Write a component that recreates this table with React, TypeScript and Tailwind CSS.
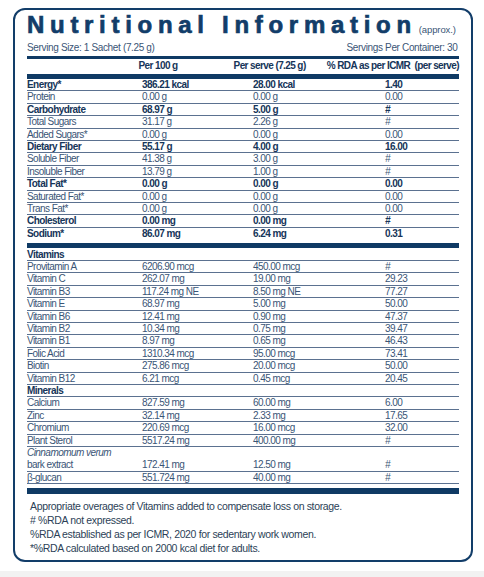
import React from 'react';

type Row = {
  name: string;
  per100: string;
  perServe: string;
  rda: string;
  bold?: boolean;
  last?: boolean;
};

const macroRows: Row[] = [
  { name: 'Energy*', per100: '386.21 kcal', perServe: '28.00 kcal', rda: '1.40', bold: true },
  { name: 'Protein', per100: '0.00 g', perServe: '0.00 g', rda: '0.00' },
  { name: 'Carbohydrate', per100: '68.97 g', perServe: '5.00 g', rda: '#', bold: true },
  { name: 'Total Sugars', per100: '31.17 g', perServe: '2.26 g', rda: '#' },
  { name: 'Added Sugars*', per100: '0.00 g', perServe: '0.00 g', rda: '0.00' },
  { name: 'Dietary Fiber', per100: '55.17 g', perServe: '4.00 g', rda: '16.00', bold: true },
  { name: 'Soluble Fiber', per100: '41.38 g', perServe: '3.00 g', rda: '#' },
  { name: 'Insoluble Fiber', per100: '13.79 g', perServe: '1.00 g', rda: '#' },
  { name: 'Total Fat*', per100: '0.00 g', perServe: '0.00 g', rda: '0.00', bold: true },
  { name: 'Saturated Fat*', per100: '0.00 g', perServe: '0.00 g', rda: '0.00' },
  { name: 'Trans Fat*', per100: '0.00 g', perServe: '0.00 g', rda: '0.00' },
  { name: 'Cholesterol', per100: '0.00 mg', perServe: '0.00 mg', rda: '#', bold: true },
  { name: 'Sodium*', per100: '86.07 mg', perServe: '6.24 mg', rda: '0.31', bold: true, last: true },
];

const vitaminRows: Row[] = [
  { name: 'Provitamin A', per100: '6206.90 mcg', perServe: '450.00 mcg', rda: '#' },
  { name: 'Vitamin C', per100: '262.07 mg', perServe: '19.00 mg', rda: '29.23' },
  { name: 'Vitamin B3', per100: '117.24 mg NE', perServe: '8.50 mg NE', rda: '77.27' },
  { name: 'Vitamin E', per100: '68.97 mg', perServe: '5.00 mg', rda: '50.00' },
  { name: 'Vitamin B6', per100: '12.41 mg', perServe: '0.90 mg', rda: '47.37' },
  { name: 'Vitamin B2', per100: '10.34 mg', perServe: '0.75 mg', rda: '39.47' },
  { name: 'Vitamin B1', per100: '8.97 mg', perServe: '0.65 mg', rda: '46.43' },
  { name: 'Folic Acid', per100: '1310.34 mcg', perServe: '95.00 mcg', rda: '73.41' },
  { name: 'Biotin', per100: '275.86 mcg', perServe: '20.00 mcg', rda: '50.00' },
  { name: 'Vitamin B12', per100: '6.21 mcg', perServe: '0.45 mcg', rda: '20.45' },
];

const mineralRows: Row[] = [
  { name: 'Calcium', per100: '827.59 mg', perServe: '60.00 mg', rda: '6.00' },
  { name: 'Zinc', per100: '32.14 mg', perServe: '2.33 mg', rda: '17.65' },
  { name: 'Chromium', per100: '220.69 mcg', perServe: '16.00 mcg', rda: '32.00' },
  { name: 'Plant Sterol', per100: '5517.24 mg', perServe: '400.00 mg', rda: '#' },
];

const Rda = ({ value }: { value: string }) =>
  value === '#' ? <span className="italic">#</span> : <span>{value}</span>;

const DataRow = ({ row }: { row: Row }) => (
  <div
    className={`grid grid-cols-[115px_111px_132px_1fr] h-[12.4px] leading-[11.4px] ${
      row.last ? '' : 'border-b border-[#5b7190]'
    } ${row.bold ? 'font-bold text-[#163559]' : 'text-[#3a5576]'}`}
  >
    <span>{row.name}</span>
    <span>{row.per100}</span>
    <span>{row.perServe}</span>
    <Rda value={row.rda} />
  </div>
);

const Bar = ({ className }: { className: string }) => (
  <div className={`bg-[#0f3a64] ${className}`} />
);

export default function App() {
  return (
    <div
      className="h-[577px] bg-white flex flex-col"
      style={{ fontFamily: '"Liberation Sans", Arial, sans-serif' }}
    >
      <div className="ml-[13px] mt-[8px] w-[460px] h-[554px] border-2 border-[#123d69] rounded-[12px] pl-[12px] pr-[11.5px] pt-[3px]">
        {/* title */}
        <div className="flex items-baseline h-[24px] leading-[24px]">
          <h1 className="text-[24px] font-bold tracking-[5.7px] text-[#123d69] [-webkit-text-stroke:0.7px_#123d69]">
            Nutritional Information
          </h1>
          <span className="ml-[2px] text-[9.5px] tracking-[-0.1px] text-[#3a5576]">(approx.)</span>
        </div>

        {/* serving info */}
        <div className="flex justify-between mt-[4.5px] h-[12px] leading-[12px] text-[10px] tracking-[-0.35px] text-[#3a5576]">
          <span>Serving Size: 1 Sachet (7.25 g)</span>
          <span className="mr-[2px]">Servings Per Container: 30</span>
        </div>

        <div className="w-[432px] text-[10px] tracking-[-0.55px]">
          <Bar className="mt-[2px] h-[3px]" />

          {/* column headers */}
          <div className="flex h-[15.5px] leading-[13px] font-bold text-[10px] tracking-[-0.6px] text-[#163559]">
            <span className="w-[116px]" />
            <span className="w-[99px]">Per 100 g</span>
            <span className="w-[97px]">Per serve (7.25 g)</span>
            <span className="whitespace-pre">% RDA as per ICMR  (per serve)</span>
          </div>
          <Bar className="h-[5px]" />

          {macroRows.map((r) => (
            <DataRow key={r.name} row={r} />
          ))}

          <Bar className="mt-[3px] h-[5px]" />

          <div className="h-[13px] pt-[1px] leading-[12px] border-b border-[#5b7190] font-bold text-[#163559]">
            Vitamins
          </div>
          {vitaminRows.map((r) => (
            <DataRow key={r.name} row={r} />
          ))}

          <div className="h-[12.4px] leading-[11.4px] border-b border-[#5b7190] font-bold text-[#163559]">
            Minerals
          </div>
          {mineralRows.map((r) => (
            <DataRow key={r.name} row={r} />
          ))}

          {/* two-line botanical row */}
          <div className="grid grid-cols-[115px_111px_132px_1fr] h-[24.8px] leading-[11.9px] border-b border-[#5b7190] text-[#3a5576]">
            <span>
              <span className="italic">Cinnamomum verum</span>
              <br />
              bark extract
            </span>
            <span className="self-end">172.41 mg</span>
            <span className="self-end">12.50 mg</span>
            <span className="self-end italic">#</span>
          </div>
          <DataRow row={{ name: 'β-glucan', per100: '551.724 mg', perServe: '40.00 mg', rda: '#' }} />

          <Bar className="mt-[3.6px] h-[6px]" />
        </div>

        {/* footnotes */}
        <div className="pt-[5.5px] pl-[3px] text-[10.5px] leading-[14px] tracking-[-0.35px] text-[#2c3f57]">
          <p>Appropriate overages of Vitamins added to compensate loss on storage.</p>
          <p># %RDA not expressed.</p>
          <p>%RDA established as per ICMR, 2020 for sedentary work women.</p>
          <p>*%RDA calculated based on 2000 kcal diet for adults.</p>
        </div>
      </div>
      <div className="mt-auto h-[6px] bg-[#f2f2f2]" />
    </div>
  );
}
